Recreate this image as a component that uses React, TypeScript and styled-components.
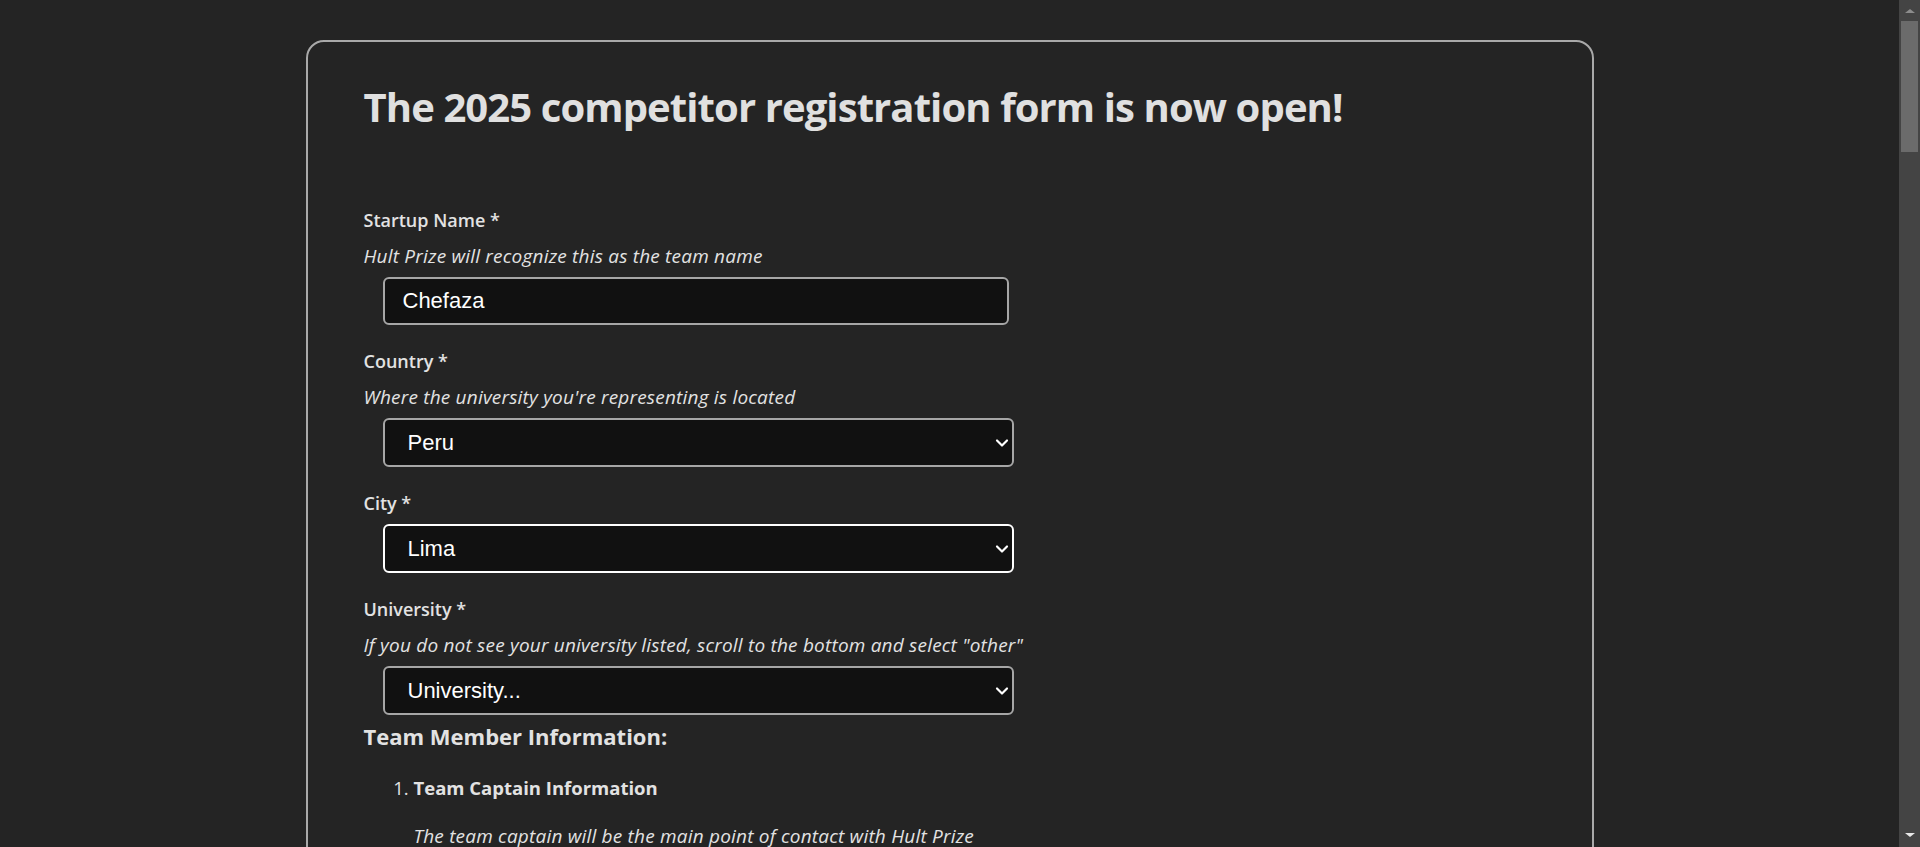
import React from "react";
import styled, { createGlobalStyle } from "styled-components";
import { ChevronDown } from "lucide-react";

const GlobalStyle = createGlobalStyle`
  html {
    color-scheme: dark;
    background: #242424;
  }
  body {
    margin: 0;
    background: #242424;
    color: #e2e2e2;
    font-family: "Open Sans", "Segoe UI", sans-serif;
  }
  *, *::before, *::after {
    box-sizing: border-box;
  }
`;

const Page = styled.main`
  padding: 40px 21px 60px 0;
`;

const Card = styled.section`
  width: 1288px;
  min-height: 5160px;
  margin: 0 auto;
  border: 2px solid #a9a9a9;
  border-radius: 18px;
  padding: 41px 56px 80px;
`;

const Title = styled.h1`
  margin: 0;
  font-size: 40px;
  line-height: 48px;
  font-weight: 700;
  letter-spacing: -0.9px;
  color: #e0e0e0;
`;

const Form = styled.form`
  margin-top: 77px;
  display: flex;
  flex-direction: column;
`;

const Field = styled.div`
  display: flex;
  flex-direction: column;
  align-items: flex-start;
  & + & {
    margin-top: 24px;
  }
`;

const Label = styled.label`
  font-size: 18px;
  line-height: 24px;
  font-weight: 600;
  color: #e2e2e2;
`;

const Hint = styled.span`
  margin-top: 12px;
  font-size: 19px;
  line-height: 24px;
  letter-spacing: 0.2px;
  font-style: italic;
  font-weight: 400;
  color: #e2e2e2;
`;

const TextInput = styled.input`
  margin: 9px 0 0 19px;
  width: 626px;
  height: 48px;
  background: #111111;
  color: #ffffff;
  border: 2px solid #a6a6a6;
  border-radius: 6px;
  padding: 0 18px;
  font: 22px "Liberation Sans", Arial, sans-serif;
  outline: none;
`;

const SelectWrap = styled.div`
  position: relative;
  margin: 9px 0 0 19px;
  width: 631px;
`;

const Select = styled.select<{ $focused?: boolean }>`
  appearance: none;
  -webkit-appearance: none;
  display: block;
  width: 100%;
  height: 49px;
  background: #111111;
  color: #ffffff;
  border: 2px solid ${(p) => (p.$focused ? "#ffffff" : "#a6a6a6")};
  border-radius: 6px;
  padding: 0 40px 0 23px;
  font: 22px "Liberation Sans", Arial, sans-serif;
  outline: none;
`;

const Chevron = styled(ChevronDown)`
  position: absolute;
  right: 2px;
  top: 50%;
  transform: translateY(-50%);
  color: #ffffff;
  pointer-events: none;
`;

const SectionHeading = styled.h3`
  margin: 6px 0 0;
  font-size: 22px;
  line-height: 30px;
  font-weight: 700;
  color: #e2e2e2;
`;

const MemberList = styled.ol`
  margin: 24px 0 0;
  padding-left: 50px;
  font-size: 18.5px;
  line-height: 26px;
  color: #e2e2e2;
`;

const Member = styled.li`
  & + & {
    margin-top: 48px;
  }
`;

const MemberTitle = styled.strong`
  font-weight: 700;
`;

const MemberNote = styled.p`
  margin: 23px 0 24px;
  font-size: 19px;
  line-height: 24px;
  letter-spacing: 0.2px;
  font-style: italic;
`;

const MemberFields = styled.div`
  display: flex;
  flex-direction: column;
`;

const SubmitButton = styled.button`
  margin-top: 48px;
  align-self: flex-start;
  padding: 12px 32px;
  background: #111111;
  color: #ffffff;
  border: 2px solid #a6a6a6;
  border-radius: 6px;
  font: 600 18px "Open Sans", sans-serif;
`;

/* Browser-style scrollbar drawn over the right edge */
const ScrollRail = styled.div`
  position: fixed;
  top: 0;
  right: 0;
  bottom: 0;
  width: 21px;
  background: #444444;
  display: flex;
  flex-direction: column;
  align-items: center;
  justify-content: space-between;
  padding: 9px 0 10px;
  pointer-events: none;
`;

const RailArrow = styled.span<{ $dir: "up" | "down" }>`
  width: 0;
  height: 0;
  border-left: 5px solid transparent;
  border-right: 5px solid transparent;
  ${(p) =>
    p.$dir === "up"
      ? "border-bottom: 4px solid #8c8c8c;"
      : "border-top: 4px solid #e8e8e8;"}
`;

const RailThumb = styled.span`
  position: absolute;
  top: 21px;
  left: 2px;
  width: 17px;
  height: 131px;
  background: #6b6b6b;
`;

type FieldDef = {
  label: string;
  hint?: string;
  kind: "text" | "select";
  value?: string;
  focused?: boolean;
};

const topFields: FieldDef[] = [
  {
    label: "Startup Name *",
    hint: "Hult Prize will recognize this as the team name",
    kind: "text",
    value: "Chefaza",
  },
  {
    label: "Country *",
    hint: "Where the university you're representing is located",
    kind: "select",
    value: "Peru",
  },
  { label: "City *", kind: "select", value: "Lima", focused: true },
  {
    label: "University *",
    hint: 'If you do not see your university listed, scroll to the bottom and select "other"',
    kind: "select",
    value: "University...",
  },
];

const personFields: FieldDef[] = [
  { label: "First Name *", kind: "text" },
  { label: "Last Name *", kind: "text" },
  { label: "Email *", hint: "Please use your university email address", kind: "text" },
  { label: "Phone Number *", kind: "text" },
  { label: "Nationality *", kind: "select", value: "Country..." },
  { label: "Degree Level *", kind: "select", value: "Degree..." },
  { label: "Year of Study *", kind: "select", value: "Year..." },
  { label: "Field of Study *", kind: "text" },
];

const members = [
  {
    title: "Team Captain Information",
    note: "The team captain will be the main point of contact with Hult Prize",
  },
  { title: "Team Member 2 Information", note: "Required" },
  { title: "Team Member 3 Information", note: "Required" },
  { title: "Team Member 4 Information", note: "Optional" },
];

function FormField({ def, id }: { def: FieldDef; id: string }) {
  return (
    <Field>
      <Label htmlFor={id}>{def.label}</Label>
      {def.hint && <Hint>{def.hint}</Hint>}
      {def.kind === "text" ? (
        <TextInput id={id} type="text" defaultValue={def.value ?? ""} />
      ) : (
        <SelectWrap>
          <Select id={id} $focused={def.focused} defaultValue={def.value}>
            <option value={def.value}>{def.value}</option>
          </Select>
          <Chevron size={20} strokeWidth={2.6} />
        </SelectWrap>
      )}
    </Field>
  );
}

export default function App() {
  return (
    <>
      <GlobalStyle />
      <Page>
        <Card>
          <Title>The 2025 competitor registration form is now open!</Title>
          <Form onSubmit={(e) => e.preventDefault()}>
            {topFields.map((f, i) => (
              <FormField key={f.label} def={f} id={`top-${i}`} />
            ))}
            <SectionHeading>Team Member Information:</SectionHeading>
            <MemberList>
              {members.map((m, mi) => (
                <Member key={m.title}>
                  <MemberTitle>{m.title}</MemberTitle>
                  <MemberNote>{m.note}</MemberNote>
                  <MemberFields>
                    {personFields.map((f, fi) => (
                      <FormField key={f.label} def={f} id={`m${mi}-${fi}`} />
                    ))}
                  </MemberFields>
                </Member>
              ))}
            </MemberList>
            <SubmitButton type="submit">Submit</SubmitButton>
          </Form>
        </Card>
      </Page>
      <ScrollRail aria-hidden="true">
        <RailArrow $dir="up" />
        <RailThumb />
        <RailArrow $dir="down" />
      </ScrollRail>
    </>
  );
}
